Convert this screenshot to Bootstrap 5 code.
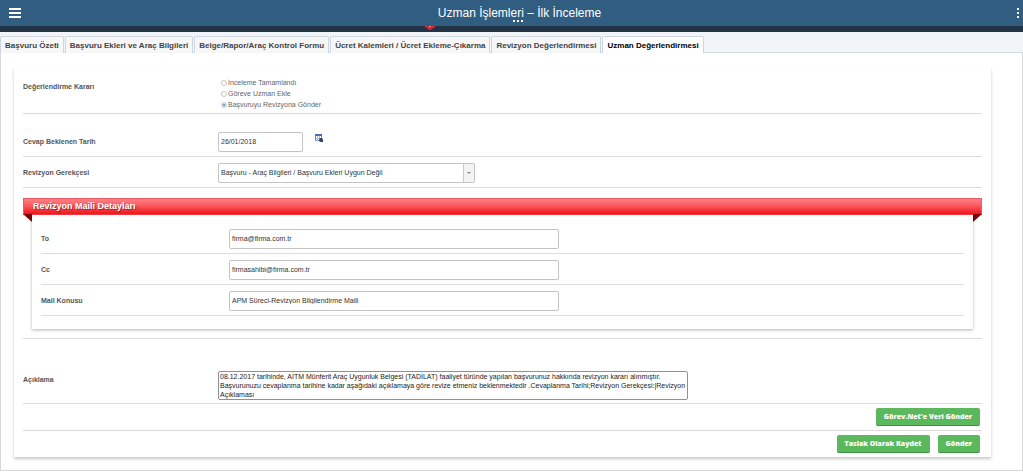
<!DOCTYPE html>
<html lang="tr">
<head>
<meta charset="utf-8">
<meta name="viewport" content="width=device-width, initial-scale=1">
<title>Uzman İşlemleri – İlk İnceleme</title>
<link href="https://cdn.jsdelivr.net/npm/bootstrap@5.3.0/dist/css/bootstrap.min.css" rel="stylesheet">
<style>
body{font-family:"Liberation Sans",Arial,sans-serif;font-size:7px;line-height:11px;color:#4c4c4c;background:#fff}
.app-bar{background:#315d80;height:26px;color:#fff}
.app-title{font-size:12px;line-height:26px;font-weight:400}
.icon-btn{background:none;border:0;padding:0;line-height:0;color:#fff}
.dots{bottom:4px;line-height:0}
.sub-bar{background:#243447;height:6px}
.sub-bar svg{left:41%}
.tab-strip{background:#f1f5fa;padding-top:4px;border-bottom:1px solid #d5dce4;gap:1px;flex-wrap:nowrap}
.tab-strip .nav-link{font-size:8px;line-height:11px;font-weight:700;color:#444;white-space:nowrap;background:#f7f7f7;border:1px solid #cdd6e1;border-bottom:0;border-radius:2px 2px 0 0;padding:3px 4px 2px;margin-bottom:-1px}
.tab-strip .nav-link.active{background:#fff;color:#000;border-color:#cdd6e1}
.frame{border:1px solid #d8d8d8;border-top:0;padding:15px 31px 13px 13px}
.sheet{box-shadow:0 2px 3px rgba(0,0,0,.22);padding:9px 9px 0}
.line{border-bottom:1px solid #dcdcdc;padding:6px 0 4px}
.decision{padding:0 0 3px}
.decision .tag{line-height:20px}
.date-line{padding-top:18px}
.notes-line{padding:32px 0 3px}
.tag{flex:0 0 195px;font-size:7px;line-height:10px;font-weight:700;color:#555}
.inner .tag{flex-basis:188px}
.form-control,.form-select{font-size:7px;line-height:9px;height:20px;min-height:0;padding:0 2px 2px;border:1px solid #c4c4c4;border-radius:2px;color:#333}
.date-box{width:85px}
.mail-box{width:330px}
.pick{width:257px}
.pick .form-select{background-image:none}
.pick-arrow{right:1px;top:1px;bottom:1px;width:11px;background:#f3f3f3;border-left:1px solid #c9ccd2;pointer-events:none}
.note-box{width:470px;height:29px;padding:0 0 0 1px;border-color:#8494a6;resize:none;overflow:hidden;color:#222}
textarea.note-box{min-height:29px}
.choice{height:11px;color:#666}
.choice input{width:6px;height:6px;margin:0 1px 0 3px;appearance:none;border:1px solid #c6c6c6;border-radius:50%;background:#fff}
.choice input:checked{border-color:#b5cfe8;background:radial-gradient(#6d9fd2 40%,#d5e6f6 50%)}
.ribbon{margin-top:10px;height:17px;background:linear-gradient(#ff8186,#f9545a 50%,#ee1419);border:1px solid #ee5a60;border-bottom-color:#f43a40;color:#fff;font-size:9px;line-height:15px;font-weight:700;padding-left:9px;text-shadow:1px 1px 1px rgba(0,0,0,.4)}
.fold{top:100%;width:9px;height:8px}
.fold-l{left:-1px;background:#7a0408;clip-path:polygon(0 0,100% 0,100% 100%)}
.fold-r{right:-1px;background:#7a0408;clip-path:polygon(0 0,100% 0,0 100%)}
.inner{margin:0 9px 9px;padding:8px 9px 13px;box-shadow:0 1px 3px rgba(0,0,0,.3)}
.btn-go{font-family:"Open Sans",sans-serif;font-size:7px;font-weight:800;line-height:9px;color:#fff;background:#5cb85c;border:0;border-bottom:1px solid #3f9144;border-radius:2px;padding:4px 8px;height:18px}
.btn-go:hover{background:#4cae4c;color:#fff}
.actions{padding:4px 2px}
.closing{border-bottom:1px solid #dcdcdc}
</style>
</head>
<body>
<header class="app-bar d-flex align-items-center position-relative">
  <button class="icon-btn ms-2" type="button" aria-label="Menü"><svg width="14" height="12" fill="currentColor"><path d="M1 1h12v2H1zM1 5h12v2H1zM1 9h12v2H1z"/></svg></button>
  <h1 class="app-title flex-grow-1 text-center m-0">Uzman İşlemleri – İlk İnceleme</h1>
  <button class="icon-btn" type="button" aria-label="Seçenekler"><svg width="6" height="12" fill="currentColor"><path d="M0 1h2v2H0zM0 5h2v2H0zM0 9h2v2H0z"/></svg></button>
  <span class="dots position-absolute start-50"><svg width="12" height="2" fill="#fff"><path d="M1 0h2v2H1zM5 0h2v2H5zM9 0h2v2H9z"/></svg></span>
</header>
<div class="sub-bar position-relative"><svg class="position-absolute top-0 ms-1" width="14" height="4"><path d="M1 0h12L9 3Q7 5 5 3z" fill="#d42a35"/><path d="M6 0h2v1H6z" fill="#f88"/></svg></div>
<nav class="nav nav-tabs tab-strip">
  <a class="nav-link" href="#">Başvuru Özeti</a>
  <a class="nav-link" href="#">Başvuru Ekleri ve Araç Bilgileri</a>
  <a class="nav-link" href="#">Belge/Rapor/Araç Kontrol Formu</a>
  <a class="nav-link" href="#">Ücret Kalemleri / Ücret Ekleme-Çıkarma</a>
  <a class="nav-link" href="#">Revizyon Değerlendirmesi</a>
  <a class="nav-link active" href="#" aria-current="page">Uzman Değerlendirmesi</a>
</nav>
<main class="frame">
<form class="sheet">
  <div class="line decision d-flex" role="radiogroup" aria-labelledby="karar">
    <span class="tag" id="karar">Değerlendirme Kararı</span>
    <div>
      <div class="choice d-flex align-items-center"><input type="radio" name="karar" id="k1"><label for="k1">İnceleme Tamamlandı</label></div>
      <div class="choice d-flex align-items-center"><input type="radio" name="karar" id="k2"><label for="k2">Göreve Uzman Ekle</label></div>
      <div class="choice d-flex align-items-center"><input type="radio" name="karar" id="k3" checked><label for="k3">Başvuruyu Revizyona Gönder</label></div>
    </div>
  </div>
  <div class="line date-line d-flex align-items-center">
    <label class="tag" for="tarih">Cevap Beklenen Tarih</label>
    <input class="form-control date-box" id="tarih" value="26/01/2018">
    <button class="icon-btn ms-2 mb-2 ps-1" type="button" aria-label="Takvim"><svg width="9" height="9"><path d="M.5.5h6v6h-6z" fill="#fff" stroke="#6d86b0"/><path d="M0 0h7v2H0z" fill="#4a6fae"/><path d="M2.500 2v5M4.500 2v5M1 4.500h6" stroke="#a9bbd6"/><circle cx="6" cy="6" r="2" fill="#2d3e5e"/><path d="M7 7l1 1" stroke="#333"/></svg></button>
  </div>
  <div class="line d-flex align-items-center">
    <label class="tag" for="gerekce">Revizyon Gerekçesi</label>
    <div class="pick position-relative">
      <select class="form-select" id="gerekce"><option>Başvuru - Araç Bilgileri / Başvuru Ekleri Uygun Değil</option></select>
      <span class="pick-arrow position-absolute d-flex align-items-center justify-content-center"><svg width="4" height="3"><path d="M0 0h4L2 2z" fill="#888"/></svg></span>
    </div>
  </div>
  <section class="closing">
    <h2 class="ribbon position-relative mb-0">Revizyon Maili Detayları<span class="fold fold-l position-absolute"></span><span class="fold fold-r position-absolute"></span></h2>
    <div class="inner">
      <div class="line d-flex align-items-center"><label class="tag" for="to">To</label><input class="form-control mail-box" id="to" type="email" value="firma@firma.com.tr"></div>
      <div class="line d-flex align-items-center"><label class="tag" for="cc">Cc</label><input class="form-control mail-box" id="cc" type="email" value="firmasahibi@firma.com.tr"></div>
      <div class="line d-flex align-items-center"><label class="tag" for="konu">Mail Konusu</label><input class="form-control mail-box" id="konu" value="APM Süreci-Revizyon Bilgilendirme Maili"></div>
    </div>
  </section>
  <div class="line notes-line d-flex align-items-start">
    <label class="tag pt-1" for="aciklama">Açıklama</label>
    <textarea class="form-control note-box" id="aciklama" rows="3">08.12.2017 tarihinde, AİTM Münferit Araç Uygunluk Belgesi (TADİLAT) faaliyet türünde yapılan başvurunuz hakkında revizyon kararı alınmıştır.
Başvurunuzu cevaplanma tarihine kadar aşağıdaki açıklamaya göre revize etmeniz beklenmektedir .Cevaplanma Tarihi;Revizyon Gerekçesi:|Revizyon Açıklaması</textarea>
  </div>
  <div class="actions closing d-flex justify-content-end"><button class="btn btn-go" type="button">Görev.Net'e Veri Gönder</button></div>
  <div class="actions d-flex justify-content-end"><button class="btn btn-go me-1" type="button">Taslak Olarak Kaydet</button><button class="btn btn-go ms-1" type="submit">Gönder</button></div>
</form>
</main>
<script src="https://cdn.jsdelivr.net/npm/bootstrap@5.3.0/dist/js/bootstrap.bundle.min.js"></script>
</body>
</html>
